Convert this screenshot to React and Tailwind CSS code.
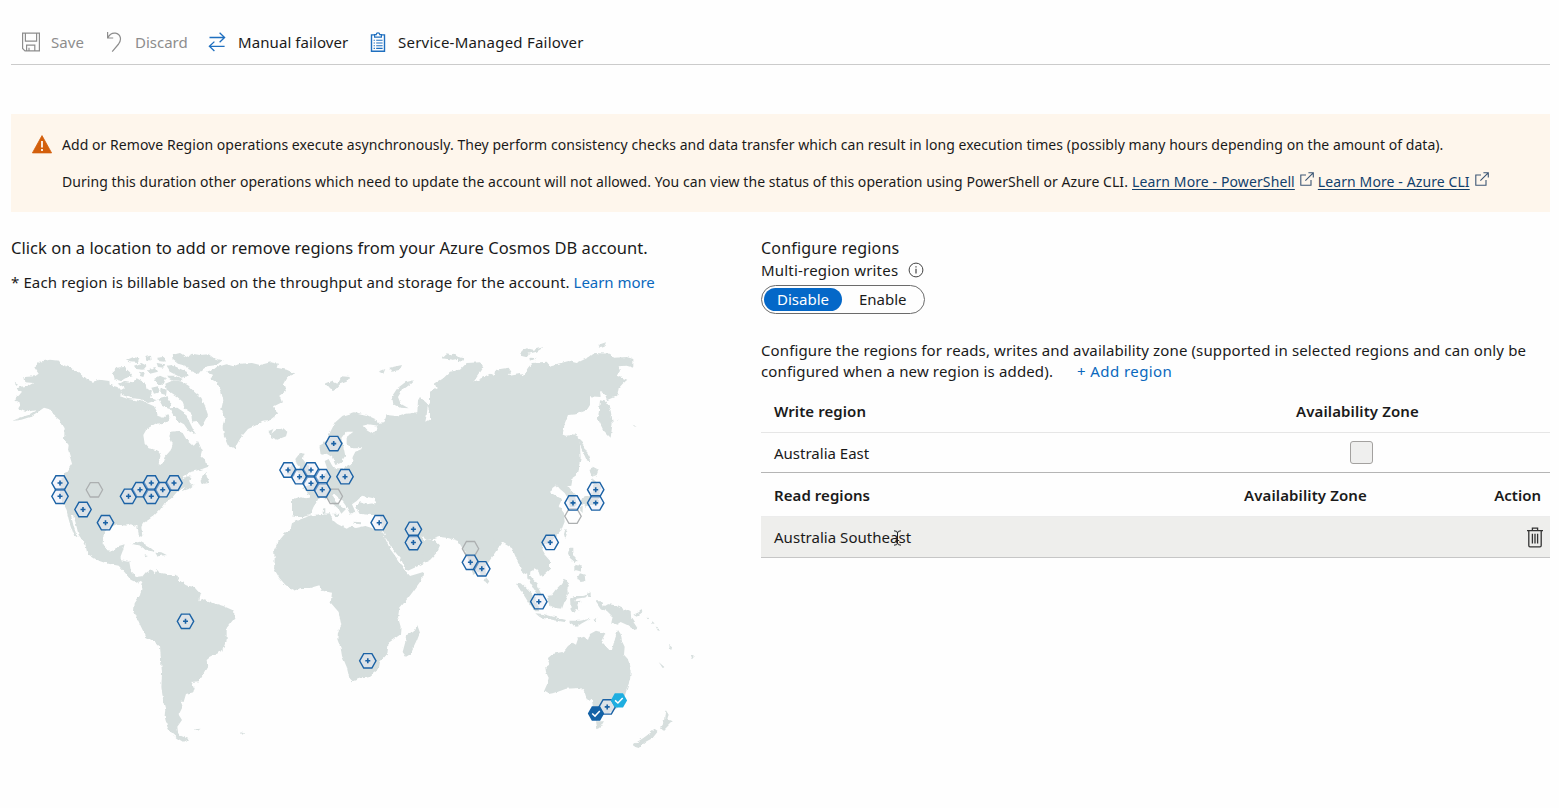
import React from 'react';

const LAND = '#d6dedd';

const PLUS = [
  [60, 483], [60, 496.3], [83, 509.5], [105.5, 522.7], [128.5, 496.3], [140, 489.7], [151.3, 483], [151.3, 496.3],
  [162.7, 489.7], [174, 483], [185.5, 621.3], [288, 470], [299.5, 476.7], [311, 470], [311, 483.2], [322.3, 476.7],
  [322.3, 489.8], [345, 476.7], [333.7, 443.6], [379.2, 522.7], [413.4, 529.3], [413.4, 542.5], [470.4, 562.3],
  [481.8, 568.8], [538.8, 601.7], [550.2, 542.4], [573, 502.9], [595.7, 489.7], [595.7, 502.9], [367.8, 660.8], [607.2, 706.9],
];
const EMPTY = [[94.4, 489.8], [334.3, 496.3], [573, 516.2], [470.5, 548.7]];
const HEX = 'M-8.2 0 -4.1 -7.2H4.1L8.2 0 4.1 7.2H-4.1Z';

function WorldMap() {
  return (
    <svg className="block h-[425px] w-[720px]" viewBox="11 335 720 425">
      <defs>
        <filter id="coast" x="-5%" y="-5%" width="110%" height="110%">
          <feTurbulence type="fractalNoise" baseFrequency="0.22" numOctaves="2" seed="4" result="n" />
          <feDisplacementMap in="SourceGraphic" in2="n" scale="3.4" xChannelSelector="R" yChannelSelector="G" />
        </filter>
      </defs>
      <g fill={LAND} filter="url(#coast)">
        {/* North America and Greenland */}
        <g transform="translate(0 335) scale(.33333)">
          <path d="M36 258 60 248 85 240 108 226 75 230 55 222 60 206 42 196 58 180 66 170 50 162 60 155 85 152 100 144 76 142 73 126 105 124 116 116 102 96 122 80 150 74 176 77 190 90 212 98 235 112 258 132 278 140 300 134 328 138 330 150 352 156 364 170 360 184 384 192 412 196 440 204 462 214 470 228 472 242 490 248 502 238 512 250 494 264 466 266 440 282 430 300 434 326 446 340 472 346 482 360 476 386 485 390 494 366 512 346 518 326 508 304 512 290 532 288 548 294 562 318 580 334 594 318 606 346 602 362 618 376 623 396 600 404 574 410 552 424 548 434 560 424 578 426 568 436 570 448 584 448 566 462 548 468 556 452 530 472 516 488 494 504 480 524 462 542 446 554 430 564 424 576 427 600 418 607 412 576 396 568 376 572 350 568 328 578 312 592 308 624 322 646 344 648 354 634 374 628 368 648 362 664 362 676 388 680 393 710 408 726 424 724 432 732 412 744 392 734 374 712 356 692 326 686 290 674 262 656 256 628 236 600 226 560 218 540 214 546 222 578 233 608 222 600 208 560 200 528 186 500 180 440 200 410 216 386 204 346 206 330 192 312 194 280 180 256 160 240 154 224 132 218 112 232 90 246 64 254Z" />
          <path d="M600 440 612 420 620 410 620 424 628 444 612 446Z" />
          <path d="M394 626 420 620 446 634 466 650 438 646 420 632ZM466 650 484 652 500 660 474 664ZM434 658 444 660 436 664ZM44 140 54 146 50 154Z" />
          <path d="M338 110 350 98 372 96 390 112 398 124 376 130 362 138 344 132ZM356 146 376 138 398 142 410 130 436 144 440 160 456 170 450 188 470 196 444 204 420 192 396 190 366 180 362 166 374 158ZM378 76 400 66 418 70 414 84 390 82ZM402 92 424 84 440 92 430 104 408 102ZM436 66 450 62 452 76 440 76ZM440 104 466 96 474 110 450 116ZM472 68 492 66 494 80 474 78ZM500 92 516 90 560 110 566 122 544 128 512 112ZM516 60 540 54 560 66 576 56 600 60 626 58 642 70 668 76 650 90 622 94 604 106 594 118 566 106 556 92 534 86 518 74ZM462 132 480 122 498 130 490 150 470 146ZM454 158 474 154 480 172 462 176ZM496 146 520 136 546 140 566 152 584 172 604 188 614 210 624 240 612 262 604 276 590 258 576 260 574 234 556 222 548 200 530 184 512 172 500 164ZM474 190 500 184 514 204 508 222 488 214ZM508 220 532 218 552 232 566 256 580 284 588 300 566 288 552 268 534 258 520 240ZM484 160 500 164 498 180 484 176Z" />
          <path d="M502 122 524 122 548 132 540 138 510 134ZM418 110 434 114 430 126 418 122ZM470 84 496 88 490 98 474 96Z" />
          <path d="M618 110 640 104 650 96 680 88 700 94 720 86 756 84 780 90 812 82 834 86 830 98 860 104 886 116 862 126 850 146 858 168 838 182 846 202 822 214 834 236 806 258 788 260 770 270 744 282 722 308 704 340 684 332 672 304 668 276 674 248 664 222 670 196 662 164 650 142 628 130 640 120Z" />
          <path d="M806 288 820 282 814 296 826 286 850 280 862 290 858 304 832 314 812 306Z" />
        </g>
        {/* South America */}
        <g transform="translate(110 540) scale(.33333)">
          <path d="M76 116 96 110 108 96 128 90 134 100 140 90 150 98 186 106 198 104 210 122 228 136 256 142 272 160 268 184 284 178 312 190 340 198 372 212 374 234 350 264 350 300 336 334 302 350 290 360 292 380 266 424 244 426 254 442 250 456 228 462 222 482 212 482 218 500 206 524 216 540 202 560 204 576 214 588 238 598 220 606 200 594 182 578 172 560 164 530 166 508 160 486 154 440 156 400 150 320 138 308 108 290 92 258 72 214 74 190 90 166 98 130 88 114Z" />
          <path d="M254 568 272 566 264 572ZM390 576 402 580 398 584Z" />
        </g>
        {/* Africa, Arabia and Madagascar */}
        <g transform="translate(250 500) scale(.33333)">
          <path d="M140 62 162 54 186 46 214 42 240 40 248 60 262 72 290 86 300 80 318 84 346 78 378 88 396 92 404 112 420 146 440 174 462 208 480 228 520 216 516 238 482 284 448 326 444 352 452 380 450 404 416 428 412 462 390 486 386 508 356 532 328 536 308 544 298 534 290 500 276 468 272 444 262 418 264 396 274 376 266 336 242 308 246 278 216 272 208 256 180 264 156 264 130 272 106 254 88 234 72 206 74 176 72 150 84 126 102 104 122 86 126 70Z" />
          <path d="M502 376 510 398 500 424 482 462 468 470 458 456 466 426 468 406 490 396Z" />
          <path d="M390 52 400 30 500 0 560 -40 650 0 650 114 600 112 576 108 548 118 530 120 514 108 520 120 532 132 544 118 570 136 560 158 540 180 500 200 474 212 466 204 452 176 424 142 406 112 396 86Z" />
          <path d="M126 -2 148 -10 180 0 198 -6 190 22 180 46 158 52 126 46Z" />
        </g>
        {/* Europe and western Asia */}
        <g transform="translate(200 335) scale(.33333)">
          <path d="M358 332 378 320 388 296 406 262 428 242 464 232 500 240 530 254 534 272 506 268 488 272 500 286 520 298 532 284 528 264 552 262 560 240 596 244 620 236 652 232 654 196 660 186 684 208 680 240 676 260 694 250 684 214 692 200 702 230 720 240 706 204 724 196 738 206 726 180 706 170 732 146 776 112 810 110 810 610 722 604 700 596 684 588 672 598 640 578 600 560 550 540 510 540 478 536 468 514 480 502 500 508 530 504 520 490 486 482 470 498 456 508 466 530 450 536 436 510 424 494 402 476 396 482 414 506 438 522 424 536 416 522 396 504 378 490 356 490 346 508 330 528 316 544 294 546 276 536 276 492 316 490 330 488 320 466 306 460 340 444 372 420 382 402 374 378 386 372 394 388 402 400 430 400 456 386 458 366 466 350 490 340 454 340 440 326 440 306 460 290 440 290 424 312 430 334 436 362 422 384 406 390 396 366 380 356 362 360Z" />
          <path d="M286 372 300 354 314 356 308 372 322 390 332 408 336 424 310 430 290 434 302 420 290 412 300 398 290 386ZM264 398 280 388 288 400 284 420 262 422Z" />
          <path d="M376 146 396 138 412 146 424 124 450 126 440 140 420 148 404 166 386 158ZM536 110 556 102 550 116ZM568 98 606 90 600 104 574 110ZM580 208 576 184 592 160 616 142 642 136 628 150 606 166 594 186 602 206 626 220 600 218ZM728 66 760 56 780 70 760 74Z" />
          <path d="M370 520 376 520 376 536 368 534ZM460 560 486 562 484 568 464 566ZM396 536 416 536 410 546Z" />
        </g>
        {/* Northern and eastern Asia */}
        <g transform="translate(430 335) scale(.33333)">
          <path d="M0 170 20 160 14 146 40 130 60 110 90 104 110 84 150 82 160 98 130 142 180 116 192 122 196 104 236 98 244 110 236 120 270 114 280 122 294 98 306 84 350 80 360 92 416 78 440 84 478 66 494 54 540 56 552 68 590 66 610 72 610 98 590 92 566 94 570 108 560 122 592 134 578 146 566 160 562 182 530 196 524 178 510 168 512 186 480 184 480 210 470 226 438 238 414 240 404 266 398 298 410 302 432 298 446 306 450 330 452 370 446 398 440 420 428 428 424 452 412 454 420 464 434 478 440 510 420 516 414 490 404 474 390 462 380 450 368 458 360 472 380 484 396 492 386 514 402 534 404 560 392 590 370 612 340 630 330 650 340 690 280 720 246 640 216 622 196 652 170 690 130 720 110 660 84 618 60 610 0 602Z" />
          <path d="M510 196 530 200 542 228 548 262 542 308 520 286 504 252ZM440 304 456 318 464 340 470 350 482 380 470 376 454 340ZM478 402 490 396 506 404 500 420 484 426ZM486 430 510 450 508 490 504 510 470 512 450 508 456 490 486 480 490 460ZM450 514 458 512 458 534 450 526ZM464 508 476 508 466 516ZM406 582 412 590 406 612 402 598Z" />
          <path d="M270 50 290 40 310 44 342 36 320 50 296 56 288 66 272 62ZM298 68 320 70 300 78ZM506 34 510 28 528 22 524 32 512 36ZM560 254 566 258 560 258ZM608 268 620 276 612 274ZM36 70 50 58 74 64 68 74ZM84 66 104 70 98 80 84 78Z" />
        </g>
        {/* Southern Asia and Oceania */}
        <g transform="translate(430 540) scale(.33333)">
          <path d="M78 -10 196 -10 188 20 172 50 166 80 168 106 152 102 130 60 118 20 98 16 90 0ZM168 112 178 124 172 132 164 122ZM246 -10 330 -10 330 20 340 40 360 62 360 86 340 104 330 108 326 96 310 78 302 86 300 106 316 126 328 150 338 170 322 160 304 132 292 112 290 80 280 48 270 46 264 54 254 34Z" />
          <path d="M0 0 14 0 28 14 20 34 0 52 -20 60 -30 0ZM258 128 272 130 296 152 316 176 328 214 316 214 296 188 278 160ZM350 168 364 166 376 150 396 130 404 116 418 132 412 148 414 162 404 184 396 206 376 204 358 196ZM316 220 340 222 376 232 408 240 404 246 370 240 330 232ZM418 242 450 242 480 236 456 250 440 260 420 248ZM420 176 432 168 456 168 472 164 468 172 440 176 436 184 452 182 442 194 448 212 438 206 430 218 422 206ZM472 158 482 154 482 172 474 170ZM418 26 430 26 430 48 442 62 434 66 420 54 414 40ZM436 74 458 80 450 94 436 90ZM450 100 464 104 466 124 452 126 440 116ZM496 184 516 184 522 198 508 206 532 192 556 196 580 206 602 216 604 236 622 264 610 268 590 254 572 246 560 254 544 248 548 230 530 212 512 208ZM490 236 502 234 496 246ZM610 224 628 216 634 206 638 216 620 230ZM650 230 656 234 652 238ZM664 242 674 250 668 252ZM676 258 690 270 684 272ZM716 314 726 322 724 330ZM686 366 704 382 698 384ZM782 346 792 350 786 358Z" />
          <path d="M346 382 358 374 354 354 368 342 400 336 414 318 428 308 438 314 444 296 462 290 474 300 480 282 498 272 526 280 514 304 538 330 546 330 556 290 564 270 572 282 576 304 584 320 582 344 594 358 602 396 600 420 586 462 580 490 562 504 536 520 514 518 490 508 486 480 470 478 464 456 450 444 408 446 376 458 356 462 342 454 350 436 356 414 348 396Z" />
          <path d="M498 544 522 544 512 560 502 568ZM706 508 716 524 712 536 728 544 716 556 700 572 690 562 702 544ZM612 612 640 594 676 568 684 574 668 594 646 606 626 624 614 620Z" />
        </g>
      </g>
      <g fill="none" stroke="#acafb0" strokeWidth="1.3">
        {EMPTY.map(([x, y]) => <path key={`${x}-${y}`} d={HEX} transform={`translate(${x} ${y})`} />)}
      </g>
      {PLUS.map(([x, y]) => (
        <g key={`${x}-${y}`} transform={`translate(${x} ${y})`} stroke="#1b62a5">
          <path d={HEX} fill="#e6e9f8" fillOpacity=".4" strokeWidth="1.4" />
          <path d="M-2.5 0H2.5M0 -2.5V2.5" strokeWidth="1.6" />
        </g>
      ))}
      <g transform="translate(618.9 700.4)">
        <path d={HEX} fill="#1eaee0" />
        <path d="M-3.8 0 -1 2.6 3.8 -2.4" fill="none" stroke="#fff" strokeWidth="1.5" />
      </g>
      <g transform="translate(596 713.5)">
        <path d={HEX} fill="#1462a6" />
        <path d="M-3.8 0 -1 2.6 3.8 -2.4" fill="none" stroke="#fff" strokeWidth="1.5" />
      </g>
    </svg>
  );
}

const SaveIcon = () => (
  <svg className="h-5 w-5" viewBox="0 0 20 20" fill="none" stroke="#8d8d8d" strokeWidth="1.2">
    <path d="M1.6 1.1H18.4V18.9H4L1.6 16.5ZM4.4 1.5V9.2H15.6V1.5M5.6 18.6V13.2H13.8V18.6M8 18.6V15.8" />
  </svg>
);
const DiscardIcon = () => (
  <svg className="h-5 w-4" viewBox="0 0 16 20" fill="none" stroke="#8d8d8d" strokeWidth="1.2">
    <path d="M1.6 0V6H7.2M1.8 5.8C3.6 2.4 6.6 .8 9.4 1.2C14.6 2 16 7.6 12.6 12L6.2 19.6" />
  </svg>
);
const SwapIcon = () => (
  <svg className="h-5 w-[18px]" viewBox="0 0 18 20" fill="none" stroke="#1f6fbf" strokeWidth="1.3">
    <path d="M1.5 5.5H16.6M11.6 .8 16.6 5.5 11.6 10.2M16.6 14.3H1.4M6.4 9.6 1.4 14.3 6.4 19" />
  </svg>
);
const ClipboardIcon = () => (
  <svg className="h-5 w-4" viewBox="0 0 16 20" fill="none" stroke="#1f6fbf" strokeWidth="1.4">
    <path d="M4.5 2.9H1.5V19.2H14.5V2.9H11.5" />
    <path d="M4.6 2.6H6.2C6.4 .4 9.6 .4 9.8 2.6H11.4V5.2H4.6Z" strokeWidth="1.2" />
    <path d="M3.6 8.3H4.9M6.2 8.3H12.6M3.6 11H4.9M6.2 11H12.6M3.6 13.7H4.9M6.2 13.7H12.6M3.6 16.4H4.9M6.2 16.4H12.6" strokeWidth="1.1" />
  </svg>
);
const ExternalIcon = () => (
  <svg className="h-[14px] w-[14px]" viewBox="0 0 14 14" fill="none" stroke="#3c5674" strokeWidth="1.1">
    <path d="M6 3H.8V13.2H11V8M8.4 .7H13.3V5.6M13.2 .8 5.4 8.6" />
  </svg>
);
const TrashIcon = () => (
  <svg className="h-[21px] w-4" viewBox="0 0 16 21" fill="none" stroke="#333" strokeWidth="1.3">
    <path d="M0 3.6H16M5.4 3.4V1.2H10.6V3.4M1.8 3.8V18.6Q1.8 19.8 3 19.8H13Q14.2 19.8 14.2 18.6V3.8M5.4 6.8V16.6M8 6.8V16.6M10.6 6.8V16.6" />
  </svg>
);

export default function App() {
  return (
    <div className="relative h-[808px] w-[1559px] overflow-hidden bg-[#fefefe] pr-[9px] pl-[11px] font-['Noto_Sans','Open_Sans',sans-serif] text-[15px] leading-[22px] whitespace-nowrap text-[#1a1a1a]">
      <header className="flex h-[65px] items-center border-b border-[#cbcbcb] pt-[20px] pl-[10px]">
        <div className="flex items-center text-[#8d8d8d]">
          <SaveIcon />
          <span className="ml-[10px] w-[55px] tracking-[0.1px]">Save</span>
          <DiscardIcon />
          <span className="ml-[13px] w-[73px]">Discard</span>
        </div>
        <SwapIcon />
        <span className="ml-[12px] w-[132px] tracking-[0.08px]">Manual failover</span>
        <ClipboardIcon />
        <span className="ml-[12px] tracking-[0.22px]">Service-Managed Failover</span>
      </header>

      <section className="mt-[49px] flex h-[98px] bg-[#fef6ec] pt-[20px] pl-[21px] text-[14px]">
        <svg className="mt-[1px] h-[19px] w-5" viewBox="0 0 20 19">
          <path d="M10 .6 19.6 17.9H.4Z" fill="#d35f0c" stroke="#d35f0c" strokeWidth=".8" strokeLinejoin="round" />
          <path d="M10 6V12.4M10 14V16" stroke="#fff" strokeWidth="1.7" />
        </svg>
        <div className="ml-[10px]">
          <p className="tracking-[0.049px]">Add or Remove Region operations execute asynchronously. They perform consistency checks and data transfer which can result in long execution times (possibly many hours depending on the amount of data).</p>
          <p className="mt-[15px] flex tracking-[0.056px]">
            <span className="w-[1070px]">During this duration other operations which need to update the account will not allowed. You can view the status of this operation using PowerShell or Azure CLI.</span>
            <a className="text-[#123f6b] tracking-[0.11px] underline underline-offset-2">Learn More - PowerShell</a>
            <span className="mr-[4px] ml-[5px] pt-px"><ExternalIcon /></span>
            <a className="text-[#123f6b] tracking-[0.1px] underline underline-offset-2">Learn More - Azure CLI</a>
            <span className="ml-[5px] pt-px"><ExternalIcon /></span>
          </p>
        </div>
      </section>

      <main className="flex">
        <section className="w-[750px] pt-[25px]">
          <p className="text-[16.5px] tracking-[0.04px]">Click on a location to add or remove regions from your Azure Cosmos DB account.</p>
          <p className="mt-[12px] tracking-[0.12px]">
            * Each region is billable based on the throughput and storage for the account. <a className="tracking-[-0.04px] text-[#0a68bd]">Learn more</a>
          </p>
          <div className="mt-[42px]"><WorldMap /></div>
        </section>

        <section className="w-[789px] pt-[25px]">
          <h2 className="text-[16px] tracking-[0.2px]">Configure regions</h2>
          <div className="flex items-center">
            <span className="tracking-[0.2px]">Multi-region writes</span>
            <svg className="ml-[10px] h-4 w-4" viewBox="0 0 16 16" fill="none" stroke="#444">
              <circle cx="8" cy="8" r="6.9" />
              <path d="M8 6.8V11.6M8 4.2V5.5" strokeWidth="1.2" />
            </svg>
          </div>
          <div className="mt-[4px] flex h-[29px] w-[164px] items-center rounded-full border border-[#6b6b6b] p-[2px]">
            <span className="flex h-[23px] w-[78px] items-center justify-center rounded-full bg-[#0468c8] pb-[2px] text-white">Disable</span>
            <span className="ml-[17px] pb-[2px]">Enable</span>
          </div>

          <p className="mt-[25px] tracking-[0.125px]">Configure the regions for reads, writes and availability zone (supported in selected regions and can only be</p>
          <p className="flex tracking-[0.145px] leading-[21px]">
            <span className="w-[316px]">configured when a new region is added).</span>
            <a className="tracking-[0.42px] text-[#0a68bd]">+ Add region</a>
          </p>

          <div className="mt-[9px]">
            <div className="flex h-[42px] items-center border-b border-[#e6e6e6] pb-[2px] pl-[13px] font-semibold">
              <span className="w-[522px] tracking-[0.08px]">Write region</span>
              <span className="tracking-[0.12px]">Availability Zone</span>
            </div>
            <div className="flex h-10 items-center border-b border-[#b5b5b5] pl-[13px]">
              <span className="w-[576px]">Australia East</span>
              <span className="h-[23px] w-[23px] rounded-[3px] border border-[#a3a19f] bg-[#efefee]" />
            </div>
            <div className="flex h-11 items-center border-b border-[#ececec] pt-px pr-[9px] pl-[13px] font-semibold">
              <span className="w-[470px] tracking-[0.06px]">Read regions</span>
              <span className="flex-1 tracking-[0.12px]">Availability Zone</span>
              <span>Action</span>
            </div>
            <div className="flex h-[41px] items-center justify-between border-b border-[#c6c6c6] bg-[#eeeeec] pr-[7px] pl-[13px]">
              <span className="tracking-[0.03px]">Australia Southeast</span>
              <TrashIcon />
            </div>
          </div>
        </section>
      </main>

      <svg className="absolute top-[530px] left-[893px] h-4 w-[9px]" viewBox="0 0 9 16" fill="none" stroke="#222" strokeWidth="1">
        <path d="M1 .8Q4.5 .8 4.5 3V13Q4.5 15.2 1 15.2M8 .8Q4.5 .8 4.5 3M4.5 13Q4.5 15.2 8 15.2M2.8 10.5H6.2" />
      </svg>
    </div>
  );
}
